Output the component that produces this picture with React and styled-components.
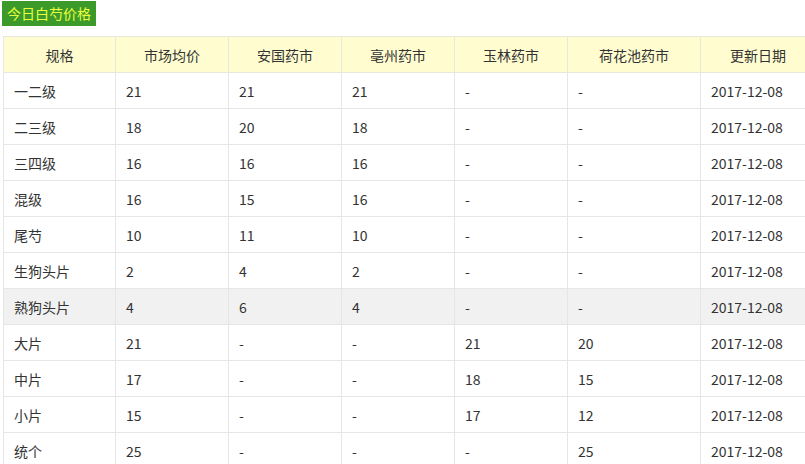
import styled, { createGlobalStyle } from "styled-components";

const Global = createGlobalStyle`
  body {
    margin: 0;
    background: #fff;
    font-family: "Microsoft YaHei", "Noto Sans CJK SC", sans-serif;
    color: #333;
    overflow: hidden;
  }
`;

const Page = styled.div`
  padding: 0 0 0 3px;
  width: 820px;
`;

const Tab = styled.div`
  display: inline-block;
  margin-left: -1px;
  background: #3b9a2a;
  color: #eaff3f;
  font-size: 14px;
  line-height: 25px;
  padding: 0 5px 0 5px;
`;

const Table = styled.table`
  margin-top: 10px;
  border-collapse: collapse;
  table-layout: fixed;
  width: 812px;
  font-size: 14px;
`;

const Th = styled.th`
  background: #fffdd0;
  border: 1px solid #e8e8e0;
  height: 35px;
  font-weight: normal;
  text-align: center;
  color: #333;
  padding: 0;
`;

const Tr = styled.tr`
  background: ${(p) => (p.$hl ? "#f1f1f1" : "#fff")};
`;

const Td = styled.td`
  border: 1px solid #e6e6e6;
  height: 35px;
  padding: 0 0 0 10px;
  color: #333;
`;

const cols = [112, 113, 113, 113, 113, 133, 115];
const heads = ["规格", "市场均价", "安国药市", "亳州药市", "玉林药市", "荷花池药市", "更新日期"];

const rows = [
  ["一二级", "21", "21", "21", "-", "-"],
  ["二三级", "18", "20", "18", "-", "-"],
  ["三四级", "16", "16", "16", "-", "-"],
  ["混级", "16", "15", "16", "-", "-"],
  ["尾芍", "10", "11", "10", "-", "-"],
  ["生狗头片", "2", "4", "2", "-", "-"],
  ["熟狗头片", "4", "6", "4", "-", "-"],
  ["大片", "21", "-", "-", "21", "20"],
  ["中片", "17", "-", "-", "18", "15"],
  ["小片", "15", "-", "-", "17", "12"],
  ["统个", "25", "-", "-", "-", "25"],
];

export default function App() {
  return (
    <Page>
      <Global />
      <Tab>今日白芍价格</Tab>
      <Table>
        <colgroup>
          {cols.map((w, i) => (
            <col key={i} style={{ width: w }} />
          ))}
        </colgroup>
        <thead>
          <tr>
            {heads.map((h) => (
              <Th key={h}>{h}</Th>
            ))}
          </tr>
        </thead>
        <tbody>
          {rows.map((r, i) => (
            <Tr key={r[0]} $hl={i === 6}>
              {r.map((c, j) => (
                <Td key={j}>{c}</Td>
              ))}
              <Td>2017-12-08</Td>
            </Tr>
          ))}
        </tbody>
      </Table>
    </Page>
  );
}
